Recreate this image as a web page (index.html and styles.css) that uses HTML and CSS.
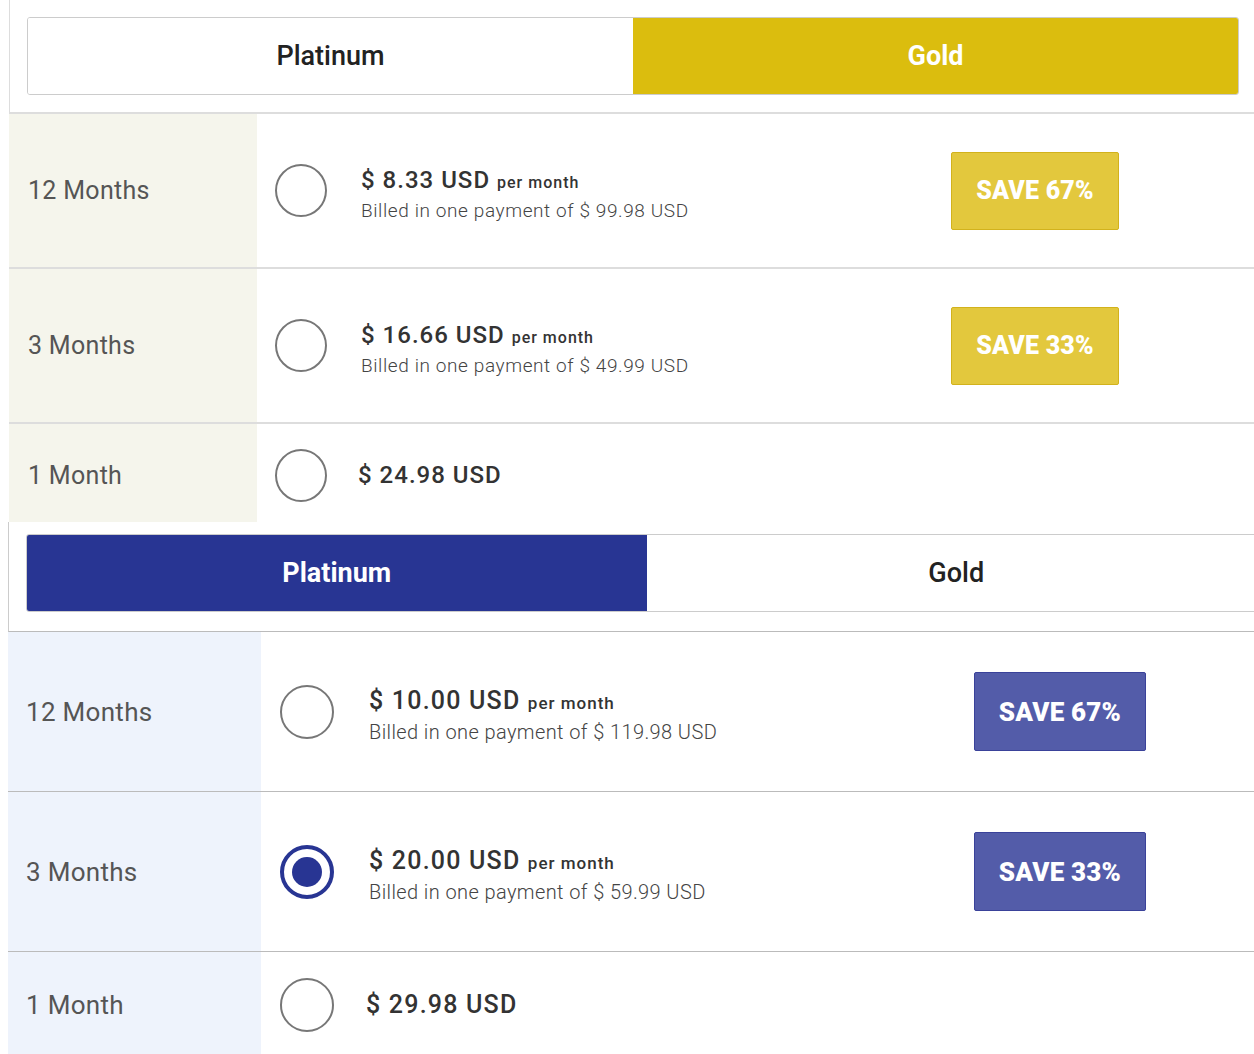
FILE: index.html
```html
<!DOCTYPE html>
<html lang="en">
<head>
  <meta charset="UTF-8" />
  <meta name="viewport" content="width=device-width, initial-scale=1.0"/>
  <title>Choose your plan</title>
  <link rel="stylesheet" href="styles.css">
</head>
<body>
  <!-- Gold plan selected -->
  <section class="plan plan--gold">
    <div class="plan-head">
      <div class="tabs">
        <button type="button" class="tab">Platinum</button>
        <button type="button" class="tab tab--active">Gold</button>
      </div>
    </div>

    <div class="plan-row">
      <div class="term">12 Months</div>
      <div class="option">
        <span class="radio"></span>
        <div class="price">
          <div class="price-main">$ 8.33 USD <small>per month</small></div>
          <div class="billed">Billed in one payment of $ 99.98 USD</div>
        </div>
        <span class="save">SAVE 67%</span>
      </div>
    </div>

    <div class="plan-row">
      <div class="term">3 Months</div>
      <div class="option">
        <span class="radio"></span>
        <div class="price">
          <div class="price-main">$ 16.66 USD <small>per month</small></div>
          <div class="billed">Billed in one payment of $ 49.99 USD</div>
        </div>
        <span class="save">SAVE 33%</span>
      </div>
    </div>

    <div class="plan-row plan-row--short">
      <div class="term">1 Month</div>
      <div class="option">
        <span class="radio"></span>
        <div class="price price--single">
          <div class="price-main">$ 24.98 USD</div>
        </div>
      </div>
    </div>
  </section>

  <!-- Platinum plan selected -->
  <section class="plan plan--platinum">
    <div class="plan-head">
      <div class="tabs">
        <button type="button" class="tab tab--active">Platinum</button>
        <button type="button" class="tab">Gold</button>
      </div>
    </div>

    <div class="plan-row">
      <div class="term">12 Months</div>
      <div class="option">
        <span class="radio"></span>
        <div class="price">
          <div class="price-main">$ 10.00 USD <small>per month</small></div>
          <div class="billed">Billed in one payment of $ 119.98 USD</div>
        </div>
        <span class="save">SAVE 67%</span>
      </div>
    </div>

    <div class="plan-row">
      <div class="term">3 Months</div>
      <div class="option">
        <span class="radio radio--checked"></span>
        <div class="price">
          <div class="price-main">$ 20.00 USD <small>per month</small></div>
          <div class="billed">Billed in one payment of $ 59.99 USD</div>
        </div>
        <span class="save">SAVE 33%</span>
      </div>
    </div>

    <div class="plan-row plan-row--short">
      <div class="term">1 Month</div>
      <div class="option">
        <span class="radio"></span>
        <div class="price price--single">
          <div class="price-main">$ 29.98 USD</div>
        </div>
      </div>
    </div>
  </section>
</body>
</html>
```

FILE: styles.css
```css
* {
  box-sizing: border-box;
}

body {
  margin: 0;
  font-family: Roboto, 'Liberation Sans', sans-serif;
  background: #fff;
  color: #333;
  overflow: hidden;
}

.plan {
  overflow: hidden;
}

.plan-head {
  border-left: 1px solid #ddd;
  border-bottom: 2px solid #ddd;
}

.tabs {
  display: flex;
  height: 78px;
  border: 1px solid #ccc;
  border-radius: 3px;
  overflow: hidden;
}

.tab {
  flex: 1;
  border: none;
  background: #fff;
  font-family: inherit;
  font-size: 27px;
  font-weight: 500;
  color: #222;
  cursor: pointer;
}

.tab--active {
  color: #fff;
  font-weight: 700;
}

.plan-row {
  display: flex;
  border-bottom: 2px solid #ddd;
}

.term {
  display: flex;
  align-items: center;
  font-size: 25px;
  letter-spacing: 0.3px;
  color: #555;
}

.option {
  flex: 1;
  display: flex;
  align-items: center;
}

.radio {
  flex: none;
  display: flex;
  align-items: center;
  justify-content: center;
  border: 2px solid #777;
  border-radius: 50%;
  background: #fff;
}

.radio--checked {
  border: 4px solid #283593;
}

.radio--checked::after {
  content: "";
  width: 30px;
  height: 30px;
  border-radius: 50%;
  background: #283593;
}

.price {
  padding-top: 6px;
}

.price-main {
  font-size: 24px;
  font-weight: 500;
  color: #333;
  letter-spacing: 1px;
}

.price-main small {
  font-size: 16px;
  font-weight: 500;
  letter-spacing: 1px;
}

.billed {
  margin-top: 5px;
  font-size: 19px;
  font-weight: 300;
  color: #444;
  letter-spacing: 0.6px;
}

.price--single {
  padding-top: 0;
}

.price--single .price-main {
  margin-left: -3px;
}

.save {
  display: flex;
  align-items: center;
  justify-content: center;
  flex: none;
  border-radius: 2px;
  color: #fff;
  font-size: 25px;
  font-weight: 900;
  letter-spacing: 0.2px;
}

/* gold version */
.plan--gold {
  margin-left: 9px;
  width: 1245px;
  height: 522px;
}

.plan--gold .plan-head {
  padding: 17px 15px 17px 17px;
}

.plan--gold .tab--active {
  background: #dbbd0e;
}

.plan--gold .plan-row {
  height: 155px;
}

.plan--gold .plan-row--short {
  height: 104px;
}

.plan--gold .term {
  width: 248px;
  padding-left: 19px;
  background: #f5f5ec;
}

.plan--gold .option {
  padding-left: 18px;
}

.plan--gold .radio {
  width: 52px;
  height: 53px;
  margin-right: 34px;
}

.plan--gold .price {
  width: 590px;
}

.plan--gold .save {
  width: 168px;
  height: 78px;
  background: #e3c83d;
  border: 1px solid #d2b21c;
}

/* platinum version */
.plan--platinum {
  margin-left: 8px;
  width: 1276px;
}

.plan--platinum .plan-head {
  border-left-color: #ccc;
  border-bottom: 1px solid #bbb;
  padding: 12px 17px 19px 17px;
}

.plan--platinum .tab--active {
  background: #283593;
}

.plan--platinum .plan-row {
  height: 160px;
  border-bottom: 1px solid #bbb;
}

.plan--platinum .plan-row--short {
  height: 106px;
}

.plan--platinum .term {
  width: 253px;
  padding-left: 18px;
  background: #eef3fc;
  font-size: 26px;
}

.plan--platinum .option {
  padding-left: 19px;
}

.plan--platinum .radio {
  width: 54px;
  height: 54px;
  margin-right: 35px;
}

.plan--platinum .price {
  width: 605px;
}

.plan--platinum .price-main {
  font-size: 25px;
  letter-spacing: 1.2px;
}

.plan--platinum .price-main small {
  font-size: 17px;
}

.plan--platinum .billed {
  font-size: 20px;
  letter-spacing: 0.4px;
}

.plan--platinum .save {
  width: 172px;
  height: 79px;
  background: #535ca9;
  border: 1px solid #3a429a;
  font-size: 26px;
}
```
